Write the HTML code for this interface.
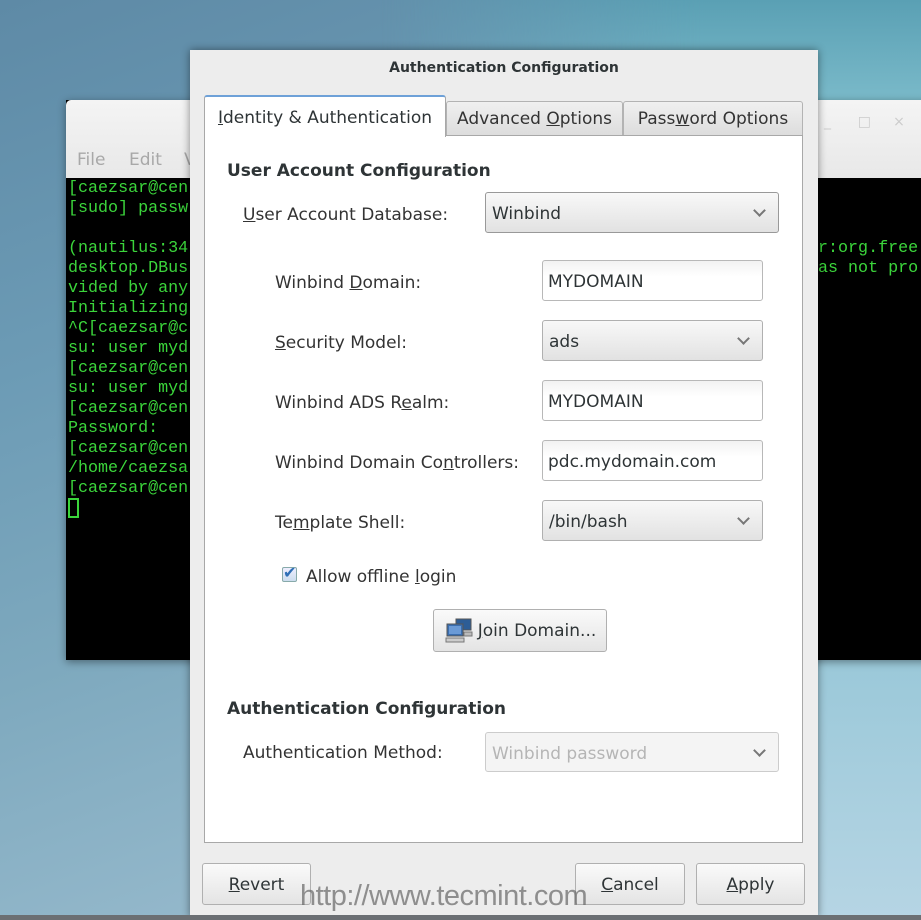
<!DOCTYPE html>
<html><head><meta charset="utf-8"><style>
*{margin:0;padding:0;box-sizing:border-box}
body{width:921px;height:920px;overflow:hidden;position:relative;font-family:"DejaVu Sans","Liberation Sans",sans-serif;
background:linear-gradient(160deg,#5e8aa6 0%,#6c9bb5 30%,#7ea9be 55%,#a7c5d6 100%)}
.bgr{position:absolute;left:380px;top:0;width:541px;height:920px;background:linear-gradient(180deg,#5aa0b4 0%,#7dbccb 12%,#8fc3d4 60%,#b6d5e4 100%);-webkit-mask-image:linear-gradient(90deg,transparent 0%,#000 60%);mask-image:linear-gradient(90deg,transparent 0%,#000 60%)}
.term{position:absolute;left:66px;top:100px;width:870px;height:560px;background:#000;box-shadow:0 2px 8px rgba(0,0,0,.4)}
.ttop{position:absolute;left:0;top:0;width:100%;height:78px;background:linear-gradient(#f4f4f4,#e8e8e8);border-radius:5px 5px 0 0}
.menu{position:absolute;top:50px;font-size:17px;color:#a8a8a8}
.tx{position:absolute;font-family:"Liberation Mono",monospace;font-size:16.7px;line-height:20px;color:#3bd53b;white-space:pre}
.dlg{position:absolute;left:190px;top:50px;width:628px;height:868px;background:#ededed;box-shadow:0 0 8px rgba(0,0,0,.45)}
.title{position:absolute;top:9px;width:100%;text-align:center;font-weight:bold;font-size:14px;color:#2e3436}
.panel{position:absolute;left:14px;top:85px;width:599px;height:708px;background:#fff;border:1px solid #a8a8a8}
.tab{position:absolute;font-size:17px;color:#333;border:1px solid #b3b3b3;border-bottom:none;border-radius:3px 3px 0 0;background:linear-gradient(#f0f0f0,#dcdcdc);padding-top:7px;text-align:center}
.tab.a{background:#fff;border-top:2px solid #6ea1d8;color:#2e3436}
u{text-decoration:underline}
.lbl{position:absolute;font-size:17px;color:#333}
.h{position:absolute;font-size:17px;font-weight:bold;color:#2e3436}
.ent{position:absolute;width:221px;height:41px;border:1px solid #b8b8b8;border-radius:3px;background:linear-gradient(#f2f2f2,#fff 40%);font-size:17px;color:#2e3436;padding:11px 5px}
.cmb{position:absolute;height:41px;border:1px solid #b0b0b0;border-radius:3px;background:linear-gradient(#f8f8f8,#e2e2e2);font-size:17px;color:#2e3436;padding:11px 6px}
.cmb:after{content:"";position:absolute;right:14px;top:13px;width:7px;height:7px;border-right:2px solid #777;border-bottom:2px solid #777;transform:rotate(45deg)}
.btn{position:absolute;height:42px;border:1px solid #b0b0b0;border-radius:3px;background:linear-gradient(#fafafa,#e4e4e4);font-size:17px;color:#2e3436;text-align:center;padding-top:11px}
.wm{position:absolute;left:300px;top:880px;font-family:"Liberation Sans",sans-serif;font-size:29px;color:rgba(110,110,110,.75);letter-spacing:-.5px}
</style></head><body>
<div class="bgr"></div>
<div class="term">
 <div class="ttop"><span class="menu" style="left:11px">File</span><span class="menu" style="left:63px">Edit</span><span class="menu" style="left:118px">V</span>
 <span style="position:absolute;left:758px;top:14px;color:#ccc;font-size:14px">_&nbsp;&nbsp;&nbsp;&nbsp;&nbsp;&nbsp;□&nbsp;&nbsp;&nbsp;&nbsp;&nbsp;×</span></div>
 <div class="tx" style="left:2px;top:79px">[caezsar@cen
[sudo] passw

(nautilus:34
desktop.DBus
vided by any
Initializing
^C[caezsar@c
su: user myd
[caezsar@cen
su: user myd
[caezsar@cen
Password:
[caezsar@cen
/home/caezsa
[caezsar@cen</div>
 <div style="position:absolute;left:2px;top:398px;width:11px;height:20px;border:2px solid #3bd53b"></div>
 <div class="tx" style="left:752px;top:139px">r:org.free
as not pro</div>
</div>
<div class="dlg">
 <div class="title" style="top:10px">Authentication Configuration</div>
 <div class="tab" style="top:51px;width:180px;height:35px;left:433px">Pass<u>w</u>ord Options</div>
 <div class="tab" style="left:256px;top:51px;width:177px;height:35px">Advanced <u>O</u>ptions</div>
 <div class="panel">
  <div class="h" style="left:22px;top:25px">User Account Configuration</div>
  <div class="lbl" style="left:38px;top:69px"><u>U</u>ser Account Database:</div>
  <div class="cmb" style="left:280px;top:56px;width:294px;border-color:#999">Winbind</div>
  <div class="lbl" style="left:70px;top:137px">Winbind <u>D</u>omain:</div>
  <div class="ent" style="left:337px;top:124px">MYDOMAIN</div>
  <div class="lbl" style="left:70px;top:197px"><u>S</u>ecurity Model:</div>
  <div class="cmb" style="left:337px;top:184px;width:221px">ads</div>
  <div class="lbl" style="left:70px;top:257px">Winbind ADS R<u>e</u>alm:</div>
  <div class="ent" style="left:337px;top:244px">MYDOMAIN</div>
  <div class="lbl" style="left:70px;top:317px">Winbind Domain Co<u>n</u>trollers:</div>
  <div class="ent" style="left:337px;top:304px">pdc.mydomain.com</div>
  <div class="lbl" style="left:70px;top:377px">Te<u>m</u>plate Shell:</div>
  <div class="cmb" style="left:337px;top:364px;width:221px">/bin/bash</div>
  <div style="position:absolute;left:77px;top:431px;width:15px;height:15px;border:1px solid #8aa;border-radius:2px;background:linear-gradient(#eef,#cde);color:#2f6fb6;font-size:16px;line-height:10px;font-weight:bold">✔</div>
  <div class="lbl" style="left:101px;top:431px">Allow offline <u>l</u>ogin</div>
  <div class="btn" style="left:228px;top:473px;width:174px;height:43px">
   <svg style="position:absolute;left:10px;top:8px" width="30" height="26" viewBox="0 0 30 26"><rect x="12" y="1" width="15" height="11" fill="#2d5d96" stroke="#555"/><rect x="3" y="6" width="16" height="12" fill="#3a6eb0" stroke="#555"/><rect x="5" y="8" width="12" height="8" fill="#6a9ad6"/><rect x="2" y="20" width="18" height="4" fill="#ccc" stroke="#777"/><rect x="20" y="14" width="8" height="4" fill="#bbb" stroke="#777"/></svg>
   <span style="padding-left:34px"><u>J</u>oin Domain...</span></div>
  <div class="h" style="left:22px;top:563px">Authentication Configuration</div>
  <div class="lbl" style="left:38px;top:607px">Authentication Method:</div>
  <div class="cmb" style="left:280px;top:596px;width:294px;height:40px;background:#f4f4f4;color:#b5b5b5;border-color:#ccc">Winbind password</div>
 </div>
 <div class="tab a" style="left:14px;top:45px;width:242px;height:42px;padding-top:11px;border-left:1px solid #a8a8a8;border-right:1px solid #a8a8a8"><u>I</u>dentity &amp; Authentication</div>
 <div class="btn" style="left:12px;top:813px;width:109px"><u>R</u>evert</div>
 <div class="btn" style="left:385px;top:813px;width:110px"><u>C</u>ancel</div>
 <div class="btn" style="left:506px;top:813px;width:109px"><u>A</u>pply</div>
</div>
<div class="wm">http://www.tecmint.com</div>
<div style="position:absolute;left:0;top:915px;width:921px;height:5px;background:#6b6f73"></div>
</body></html>
